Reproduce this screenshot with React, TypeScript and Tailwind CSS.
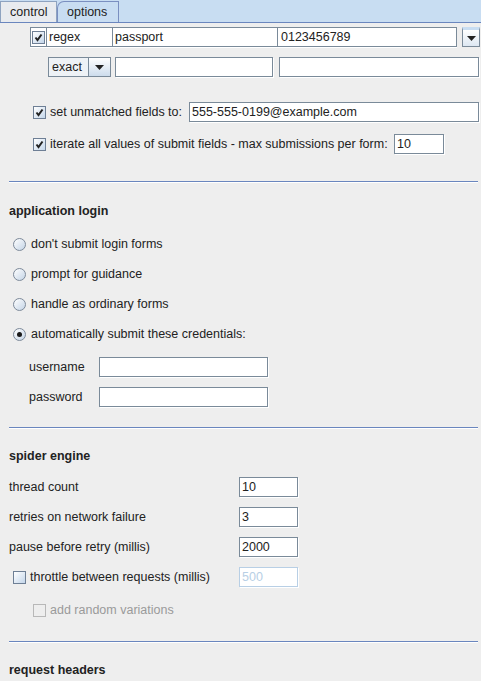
import React from "react";

const font = "font-['Liberation_Sans',Arial,sans-serif]";

function Check({ checked = false, disabled = false }: { checked?: boolean; disabled?: boolean }) {
  return (
    <span
      className={`inline-flex h-[13px] w-[13px] shrink-0 items-center justify-center border ${
        disabled
          ? "border-[#b8b8b8] bg-[#eeeeee]"
          : "border-[#6e7f95] bg-gradient-to-br from-white to-[#c4d6ea]"
      }`}
    >
      {checked && (
        <svg width="11" height="11" viewBox="0 0 11 11">
          <path d="M2.5 5.5 L4.5 8 L8.5 2.5" stroke="#222" strokeWidth="2" fill="none" />
        </svg>
      )}
    </span>
  );
}

function Radio({ selected = false }: { selected?: boolean }) {
  return (
    <span className="inline-flex h-[13px] w-[13px] shrink-0 items-center justify-center rounded-full border border-[#7d8a9a] bg-gradient-to-br from-white to-[#c4d4e6]">
      {selected && <span className="h-[5px] w-[5px] rounded-full bg-[#1a1a1a]" />}
    </span>
  );
}

function Field({ w, value = "", disabled = false }: { w: string; value?: string; disabled?: boolean }) {
  return (
    <div
      className={`${w} flex h-[20px] items-center border bg-white pl-[2px] ${
        disabled ? "border-[#b8cfe5] text-[#b8cfe5]" : "border-[#7a8a99] text-[#222]"
      } shadow-[1px_1px_0_#ffffff]`}
    >
      {value}
    </div>
  );
}

function Arrow() {
  return (
    <svg width="9" height="5" viewBox="0 0 9 5">
      <path d="M0 0 H9 L4.5 5 Z" fill="#222" />
    </svg>
  );
}

function Separator({ mt }: { mt: string }) {
  return <div className={`${mt} ml-[9px] mr-[3px] h-[1px] bg-[#6a86be] shadow-[0_1px_0_#ffffff]`} />;
}

export default function App() {
  return (
    <div className={`${font} h-[681px] w-[481px] overflow-hidden bg-[#eeeeee] text-[12.5px] text-[#222]`}>
      {/* tabs */}
      <div className="flex h-[23px] items-end border-b border-[#6a86be] bg-[#c8ddf2]">
        <div className="flex h-[21px] w-[57px] items-center border border-b-0 border-[#8ea3c0] bg-[#e8ebef] pl-[9px] text-[#222]">
          control
        </div>
        <div className="flex h-[21px] w-[62px] items-center rounded-tl-[7px] border border-b-0 border-[#7a8fc0] bg-[#c8ddf2] pl-[9px]">
          options
        </div>
      </div>

      {/* table row */}
      <div className="mt-[4px] flex h-[20px] pl-[30px]">
        <div className="flex w-[427px] border border-[#7a8a99] bg-white shadow-[0_1px_0_#ffffff]">
          <div className="flex w-[16px] items-center justify-center border-r border-[#7a8a99] bg-white">
            <Check checked />
          </div>
          <div className="flex w-[66px] items-center border-r border-[#7a8a99] pl-[2px]">regex</div>
          <div className="flex w-[165px] items-center border-r border-[#7a8a99] pl-[2px]">passport</div>
          <div className="flex flex-1 items-center pl-[3px]">0123456789</div>
        </div>
        <div className="ml-[5px] flex w-[18px] items-center justify-center border border-t-[3px] border-[#7a8a99] border-t-[#c8ddf2] bg-gradient-to-b from-white to-[#dde7f2] pt-[1px]">
          <Arrow />
        </div>
      </div>

      {/* match row */}
      <div className="mt-[10px] flex h-[20px] pl-[48px]">
        <div className="flex w-[63px] border border-[#7a8a99]">
          <div className="flex flex-1 items-center bg-[#eef2f6] pl-[3px]">exact</div>
          <div className="flex w-[22px] items-center justify-center border-l border-[#7a8a99] bg-gradient-to-b from-white to-[#cddcec]">
            <Arrow />
          </div>
        </div>
        <div className="ml-[4px]">
          <Field w="w-[158px]" />
        </div>
        <div className="ml-[6px]">
          <Field w="w-[200px]" />
        </div>
      </div>

      {/* unmatched */}
      <div className="mt-[25px] flex h-[20px] items-center pl-[33px]">
        <Check checked />
        <span className="ml-[4px] w-[139px]">set unmatched fields to:</span>
        <Field w="w-[290px]" value="555-555-0199@example.com" />
      </div>

      <div className="mt-[12px] flex h-[20px] items-center pl-[33px]">
        <Check checked />
        <span className="ml-[4px] w-[344px]">iterate all values of submit fields - max submissions per form:</span>
        <Field w="w-[50px]" value="10" />
      </div>

      <Separator mt="mt-[27px]" />

      {/* application login */}
      <div className="mt-[19px] flex h-[20px] items-center pl-[9px] font-bold">application login</div>

      {["don't submit login forms", "prompt for guidance", "handle as ordinary forms", "automatically submit these credentials:"].map(
        (label, i) => (
          <div key={label} className={`${i === 0 ? "mt-[13px]" : "mt-[10px]"} flex h-[20px] items-center pl-[13px]`}>
            <Radio selected={i === 3} />
            <span className="ml-[5px]">{label}</span>
          </div>
        )
      )}

      <div className="mt-[13px] flex h-[20px] items-center pl-[29px]">
        <span className="w-[70px]">username</span>
        <Field w="w-[169px]" />
      </div>
      <div className="mt-[10px] flex h-[20px] items-center pl-[29px]">
        <span className="w-[70px]">password</span>
        <Field w="w-[169px]" />
      </div>

      <Separator mt="mt-[20px]" />

      {/* spider engine */}
      <div className="mt-[18px] flex h-[20px] items-center pl-[9px] font-bold">spider engine</div>

      {[
        ["thread count", "10"],
        ["retries on network failure", "3"],
        ["pause before retry (millis)", "2000"],
      ].map(([label, value], i) => (
        <div key={label} className={`${i === 0 ? "mt-[11px]" : "mt-[10px]"} flex h-[20px] items-center pl-[9px]`}>
          <span className="w-[230px]">{label}</span>
          <Field w="w-[59px]" value={value} />
        </div>
      ))}

      <div className="mt-[10px] flex h-[20px] items-center pl-[13px]">
        <Check />
        <span className="ml-[4px] w-[209px]">throttle between requests (millis)</span>
        <Field w="w-[59px]" value="500" disabled />
      </div>

      <div className="mt-[13px] flex h-[20px] items-center pl-[33px] text-[#9a9a9a]">
        <Check disabled />
        <span className="ml-[4px]">add random variations</span>
      </div>

      <Separator mt="mt-[21px]" />

      <div className="mt-[18px] flex h-[20px] items-center pl-[9px] font-bold">request headers</div>
    </div>
  );
}
